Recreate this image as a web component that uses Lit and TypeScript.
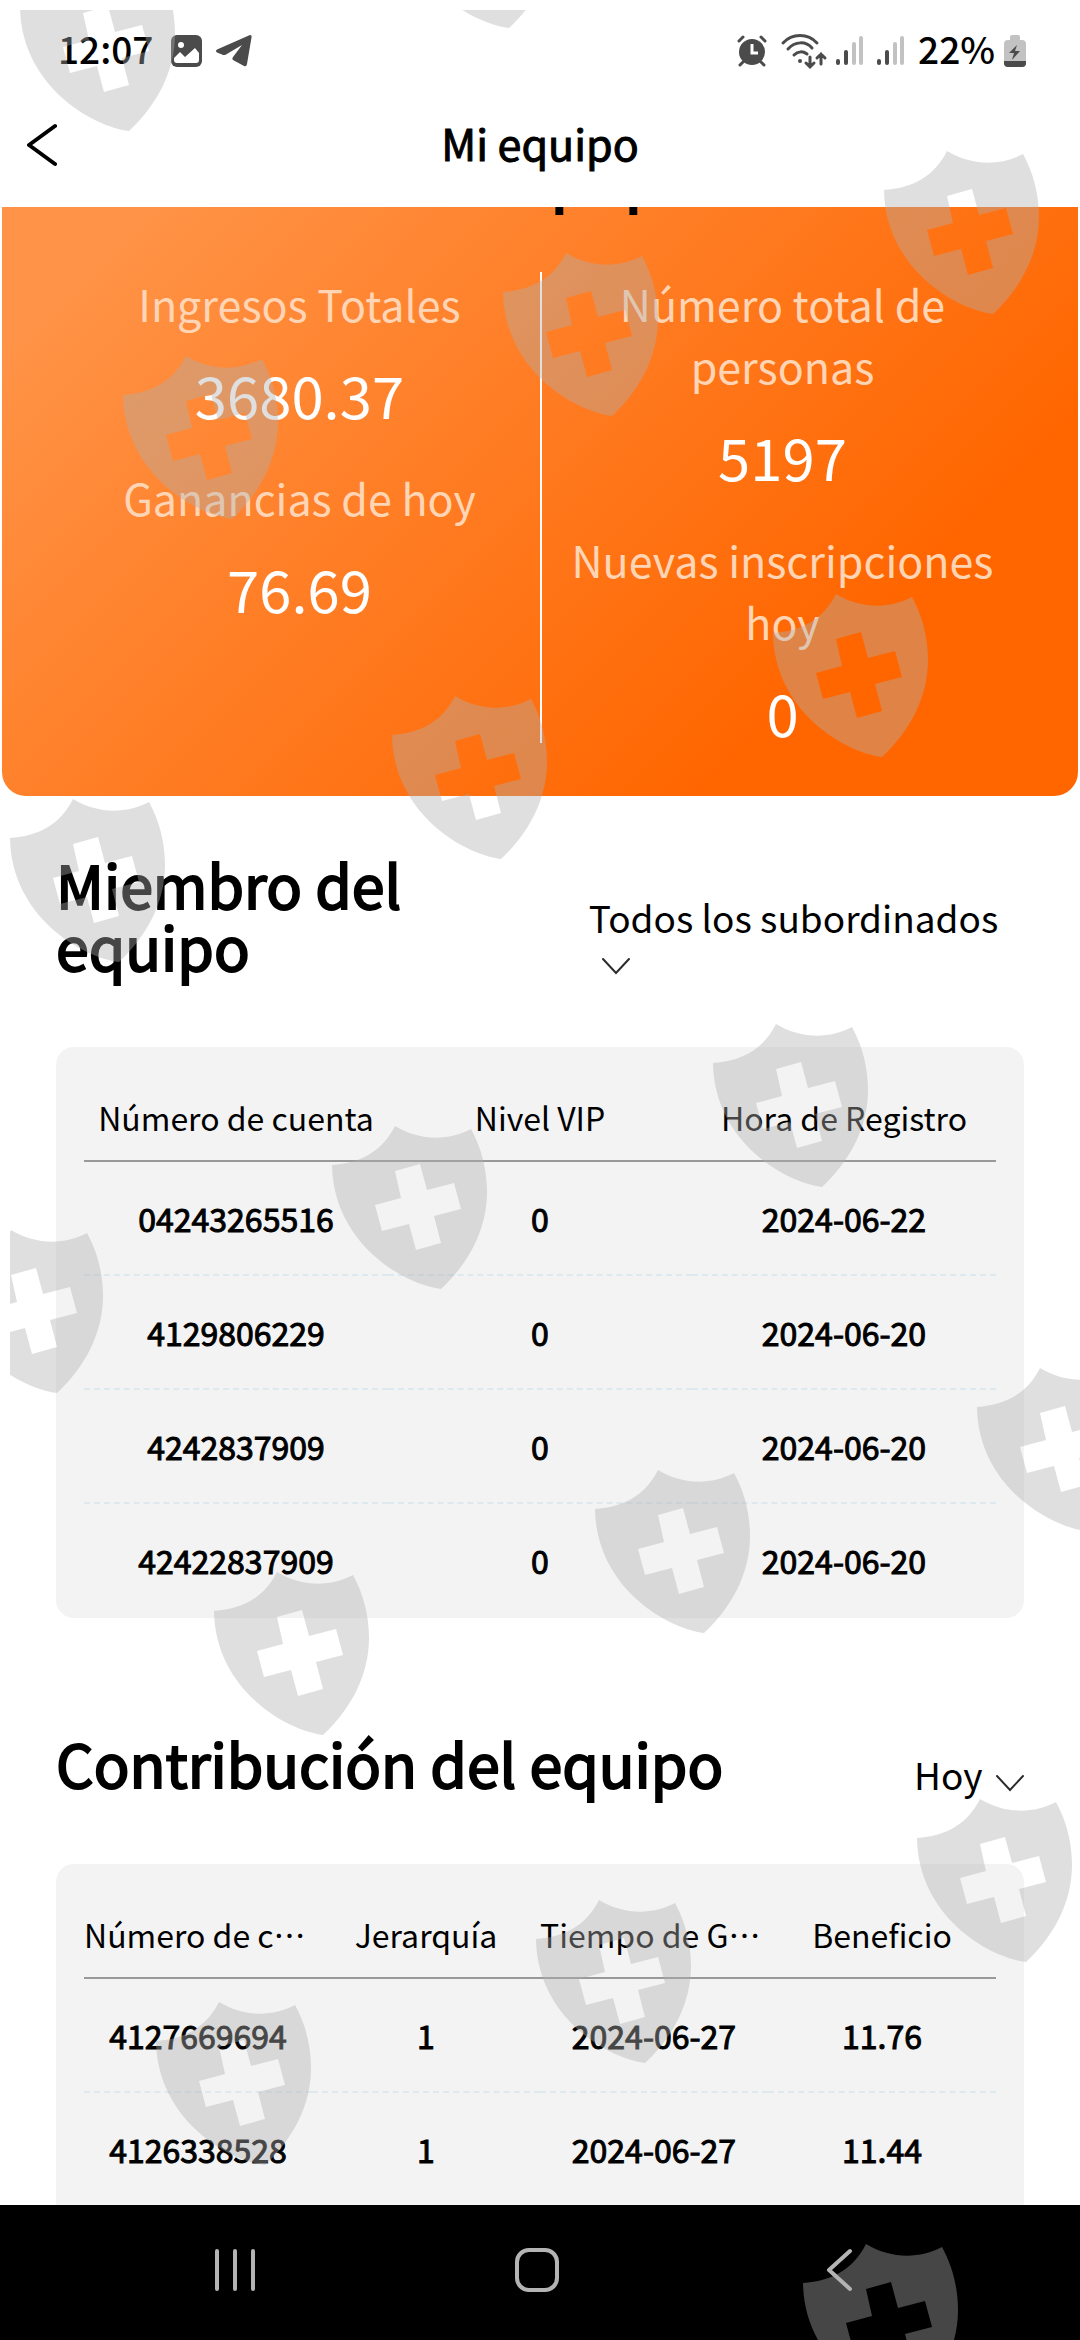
import { LitElement, html, css, svg } from "lit";
import { customElement, property } from "lit/decorators.js";

interface Stat {
  label: string;
  value: string;
}

const income: Stat[] = [
  { label: "Ingresos Totales", value: "3680.37" },
  { label: "Ganancias de hoy", value: "76.69" },
];

const people: Stat[] = [
  { label: "Número total de personas", value: "5197" },
  { label: "Nuevas inscripciones hoy", value: "0" },
];

const memberColumns = ["Número de cuenta", "Nivel VIP", "Hora de Registro"];
const memberRows = [
  ["04243265516", "0", "2024-06-22"],
  ["4129806229", "0", "2024-06-20"],
  ["4242837909", "0", "2024-06-20"],
  ["42422837909", "0", "2024-06-20"],
];

const contributionColumns = ["Número de cuenta", "Jerarquía", "Tiempo de Ganancia", "Beneficio"];
const contributionRows = [
  ["4127669694", "1", "2024-06-27", "11.76"],
  ["4126338528", "1", "2024-06-27", "11.44"],
];

// Top-left corners of the shields scattered over the screen.
const shields: [number, number][] = [
  [-2, -56],
  [378, -159],
  [862, 127],
  [481, 229],
  [101, 332],
  [751, 570],
  [370, 672],
  [-12, 775],
  [691, 1000],
  [310, 1102],
  [-74, 1206],
  [955, 1344],
  [573, 1446],
  [192, 1548],
  [895, 1775],
  [514, 1876],
  [134, 1978],
  [781, 2220],
];

const shieldPath =
  "M12 53C40 51 62 40 75 14C100 29 128 29 151 17C161 35 167 57 167 80C167 118 148 152 121 177C82 172 13 130 12 53Z" +
  "M75 59L81 86L55 93L62 119L89 112L96 138L121 131L114 104L141 97L134 71L107 78L100 52Z";

const signalIcon = svg`
  <rect class="dark" x="0" y="24" width="4" height="6" rx="2"></rect>
  <rect class="dark" x="8" y="15" width="4" height="15" rx="2"></rect>
  <rect class="pale" x="16" y="7" width="4" height="23" rx="2"></rect>
  <rect class="pale" x="23" y="1" width="4" height="29" rx="2"></rect>`;

@customElement("status-bar")
export class StatusBar extends LitElement {
  static styles = css`
    :host {
      display: flex;
      align-items: center;
      height: 68px;
      padding: 14px 54px 0 58px;
      font-size: 37px;
      font-weight: 500;
      line-height: 68px;
    }
    svg {
      display: block;
      flex: none;
      margin-top: 5px;
      overflow: visible;
    }
    .time {
      margin-right: 18px;
    }
    .image {
      margin-right: 14px;
    }
    .system {
      display: flex;
      align-items: center;
      margin-left: auto;
    }
    .alarm,
    .signal {
      margin-right: 14px;
    }
    .wifi {
      margin-right: 9px;
    }
    .percent {
      margin-right: 9px;
    }
    .dark {
      fill: #4b4b4b;
    }
    .pale {
      fill: #c2c2c2;
    }
    .hole {
      fill: #fff;
    }
    .line {
      fill: none;
      stroke: #4b4b4b;
      stroke-width: 3;
      stroke-linecap: round;
    }
    .cut {
      fill: none;
      stroke: #fff;
      stroke-width: 3;
    }
  `;

  render() {
    return html`
      <span class="time">12:07</span>
      <svg class="image" width="31" height="32" viewBox="0 0 31 32" aria-hidden="true">
        <rect class="dark" x="0" y="0" width="31" height="32" rx="6"></rect>
        <circle class="hole" cx="10" cy="10" r="3"></circle>
        <path class="hole" d="M3 23L9 17L14 22L24 13L28 18V25Q28 28 25 28H6Q3 28 3 25Z"></path>
      </svg>
      <svg width="36" height="32" viewBox="0 0 36 32" aria-hidden="true">
        <path
          class="dark"
          d="M34 0Q36 0 35.600 2L31 29Q30.500 32 28 31L17 25Q15.500 24 17 22L26 10L10 19.500Q8 20.500 6 19.500L1 17.500Q-1 16 1 14.500Z"
        ></path>
      </svg>
      <div class="system">
        <svg class="alarm" width="30" height="31" viewBox="0 0 30 31" aria-hidden="true">
          <circle class="dark" cx="15" cy="17" r="13"></circle>
          <path class="line" d="M2 6L6 2M28 6L24 2M6 27L3 30M24 27L27 30"></path>
          <path class="cut" d="M15 9V18H21"></path>
        </svg>
        <svg class="wifi" width="46" height="34" viewBox="0 0 46 34" aria-hidden="true">
          <path class="line" d="M2 9C11 -1 27 -1 36 9M7 15C14 7 25 7 31 14M13 21C17 17 22 17 26 20"></path>
          <circle class="dark" cx="19" cy="27" r="2"></circle>
          <path class="line" d="M29 23V33M25 29L29 33L33 29M40 30V20M36 24L40 20L44 24"></path>
        </svg>
        <svg class="signal" width="27" height="31" viewBox="0 0 27 31" aria-hidden="true">${signalIcon}</svg>
        <svg class="signal" width="27" height="31" viewBox="0 0 27 31" aria-hidden="true">${signalIcon}</svg>
        <span class="percent">22%</span>
        <svg width="22" height="32" viewBox="0 0 22 32" aria-hidden="true">
          <path
            class="pale"
            d="M6 2Q6 0 8 0H14Q16 0 16 2V5H18Q22 5 22 9V28Q22 32 18 32H4Q0 32 0 28V9Q0 5 4 5H6Z"
          ></path>
          <path class="dark" d="M0 26H22V28Q22 32 18 32H4Q0 32 0 28Z"></path>
          <path class="dark" d="M13 10L5 18H10L8 25L16 16H11Z"></path>
        </svg>
      </div>
    `;
  }
}

@customElement("data-card")
export class DataCard extends LitElement {
  @property({ attribute: false }) columns: string[] = [];
  @property({ attribute: false }) rows: string[][] = [];

  static styles = css`
    :host {
      display: block;
      padding: 0 28px;
      border-radius: 18px;
      background: #f3f3f3;
    }
    :host([continued]) {
      padding-bottom: 57px;
    }
    .table {
      width: 100%;
      table-layout: fixed;
      border-collapse: collapse;
      font-size: 32px;
      line-height: 46px;
      text-align: center;
    }
    .head {
      height: 66px;
      padding: 47px 0 0;
      border-bottom: 2px solid #999;
      font-weight: 400;
      vertical-align: top;
      white-space: nowrap;
      overflow: hidden;
      text-overflow: ellipsis;
    }
    .cell {
      height: 112px;
      padding: 0;
      -webkit-text-stroke: 1px #000;
    }
    .row {
      border-bottom: 2px dashed #dde9ef;
    }
    .row:last-child {
      border-bottom-color: transparent;
    }
  `;

  render() {
    return html`
      <table class="table">
        <thead>
          <tr>
            ${this.columns.map((name) => html`<th class="head" scope="col">${name}</th>`)}
          </tr>
        </thead>
        <tbody>
          ${this.rows.map(
            (row) => html`<tr class="row">
              ${row.map((value) => html`<td class="cell">${value}</td>`)}
            </tr>`
          )}
        </tbody>
      </table>
    `;
  }
}

@customElement("app-root")
export class AppRoot extends LitElement {
  static styles = css`
    :host {
      position: relative;
      display: flex;
      flex-direction: column;
      height: 100vh;
      overflow: hidden;
      background: #fff;
      color: #000;
      font-family: "Noto Sans CJK SC", "Noto Sans", sans-serif;
    }
    button {
      display: flex;
      align-items: center;
      justify-content: center;
      padding: 0;
      border: 0;
      background: none;
    }
    .topbar {
      display: grid;
      grid-template-columns: 84px 1fr 84px;
      align-items: center;
      flex: none;
      height: 125px;
    }
    .topbar-title {
      padding-bottom: 6px;
      font-size: 43px;
      line-height: 60px;
      text-align: center;
      -webkit-text-stroke: 1px #000;
    }
    .icon-line {
      fill: none;
      stroke: #000;
      stroke-width: 4;
      stroke-linecap: round;
      stroke-linejoin: round;
    }
    .content {
      flex: 1;
      min-height: 0;
      overflow: hidden auto;
      scrollbar-width: none;
    }
    .summary {
      margin: -69px 2px 0;
      padding-bottom: 53px;
      border-radius: 24px;
      background: linear-gradient(135deg, #ff9347 12%, #ff6600 78%);
    }
    .summary-title {
      margin: 0;
      padding-left: 32px;
      font-size: 64px;
      font-weight: 400;
      line-height: 66px;
      text-align: center;
      -webkit-text-stroke: 2px #000;
    }
    .stats {
      display: grid;
      grid-template-columns: 1fr 2px 1fr;
      margin-top: 68px;
      padding: 0 55px 0 57px;
      text-align: center;
    }
    .divider {
      background: #fff;
    }
    .stat-group {
      display: flex;
      flex-direction: column;
      gap: 41px;
      margin: 0;
    }
    .stat-label {
      font-size: 43px;
      line-height: 62px;
      color: #ffd5b5;
    }
    .stat-value {
      margin: 29px 0 0;
      font-size: 58px;
      line-height: 62px;
      color: #fff;
    }
    .section {
      padding: 57px 56px;
    }
    .section-head {
      display: flex;
      align-items: flex-end;
      justify-content: space-between;
      margin-bottom: 70px;
    }
    .section-title {
      margin: 0;
      font-size: 59px;
      font-weight: 400;
      line-height: 62px;
      -webkit-text-stroke: 2px #000;
    }
    .picker {
      display: flex;
      flex-wrap: wrap;
      align-items: flex-end;
    }
    .picker-select {
      appearance: none;
      height: 56px;
      margin: -8px 0;
      padding: 0;
      border: 0;
      background: none;
      color: #000;
      font-family: inherit;
      font-size: 37px;
      line-height: 56px;
    }
    .picker-arrow {
      display: block;
      width: 28px;
      height: 40px;
      margin-left: 13px;
      fill: none;
      stroke: #2b2b2b;
      stroke-width: 2;
      stroke-linecap: round;
    }
    .navbar {
      display: grid;
      grid-template-columns: repeat(3, 1fr);
      flex: none;
      height: 129px;
      padding: 0 90px 6px 84px;
      background: #000;
    }
    .nav-icon {
      fill: none;
      stroke: #b4b4b4;
      stroke-width: 4;
      stroke-linecap: round;
      stroke-linejoin: round;
    }
    .shields {
      position: absolute;
      top: 10px;
      left: 10px;
      width: calc(100% - 10px);
      height: calc(100% - 10px);
      overflow: hidden;
      pointer-events: none;
      fill: rgba(174, 174, 174, 0.4);
      fill-rule: evenodd;
    }
  `;

  private stats(items: Stat[]) {
    return html`<dl class="stat-group">
      ${items.map(
        (item) => html`<div>
          <dt class="stat-label">${item.label}</dt>
          <dd class="stat-value">${item.value}</dd>
        </div>`
      )}
    </dl>`;
  }

  private sectionHead(id: string, title: string, option: string) {
    return html`<div class="section-head">
      <h2 class="section-title" id=${id}>${title}</h2>
      <div class="picker">
        <select class="picker-select" aria-labelledby=${id}>
          <option>${option}</option>
        </select>
        <svg class="picker-arrow" viewBox="0 0 28 40" aria-hidden="true">
          <path d="M1 22L14 36L27 22"></path>
        </svg>
      </div>
    </div>`;
  }

  render() {
    return html`
      <status-bar></status-bar>
      <header class="topbar">
        <button type="button" aria-label="Atrás">
          <svg width="30" height="44" viewBox="0 0 30 44" aria-hidden="true">
            <path class="icon-line" d="M28 3L2 22L28 41"></path>
          </svg>
        </button>
        <div class="topbar-title">Mi equipo</div>
      </header>
      <main class="content">
        <section class="summary">
          <h1 class="summary-title">Mi equipo</h1>
          <div class="stats">
            ${this.stats(income)}
            <div class="divider"></div>
            ${this.stats(people)}
          </div>
        </section>
        <section class="section">
          ${this.sectionHead("members", "Miembro del equipo", "Todos los subordinados")}
          <data-card .columns=${memberColumns} .rows=${memberRows}></data-card>
        </section>
        <section class="section">
          ${this.sectionHead("contribution", "Contribución del equipo", "Hoy")}
          <data-card continued .columns=${contributionColumns} .rows=${contributionRows}></data-card>
        </section>
      </main>
      <nav class="navbar">
        <button type="button" aria-label="Recientes">
          <svg width="42" height="44" viewBox="0 0 42 44" aria-hidden="true">
            <path class="nav-icon" d="M3 3V41M21 3V41M39 3V41"></path>
          </svg>
        </button>
        <button type="button" aria-label="Inicio">
          <svg width="44" height="44" viewBox="0 0 44 44" aria-hidden="true">
            <rect class="nav-icon" x="2" y="2" width="40" height="40" rx="12"></rect>
          </svg>
        </button>
        <button type="button" aria-label="Volver">
          <svg width="26" height="44" viewBox="0 0 26 44" aria-hidden="true">
            <path class="nav-icon" d="M24 3L3 22L24 41"></path>
          </svg>
        </button>
      </nav>
      <svg class="shields" aria-hidden="true">
        ${shields.map(([x, y]) => svg`<path transform="translate(${x} ${y})" d=${shieldPath}></path>`)}
      </svg>
    `;
  }
}
